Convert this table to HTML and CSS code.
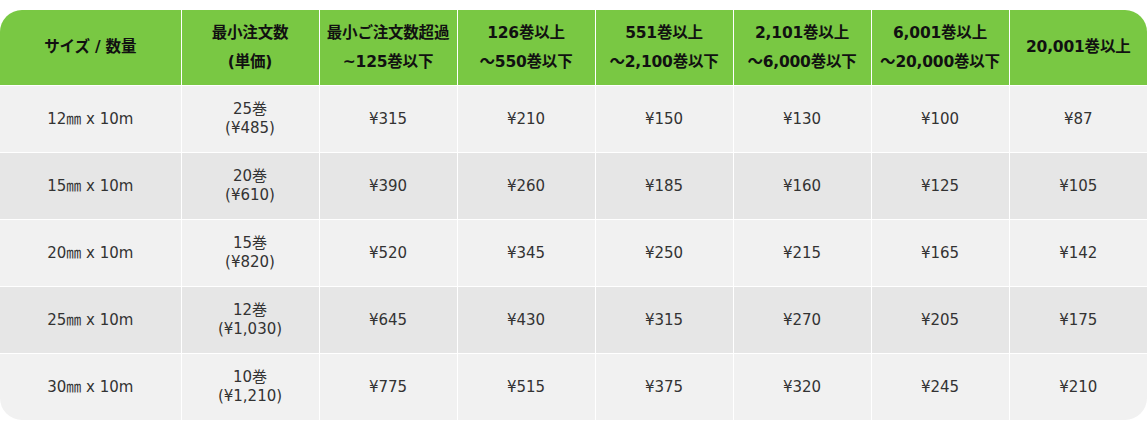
FILE: index.html
```html
<!DOCTYPE html>
<html lang="ja">
<head>
<meta charset="utf-8">
<link rel="stylesheet" href="styles.css">
</head>
<body>
<div class="wrap">
<table class="price">
<colgroup>
<col class="c-first"><col class="c"><col class="c"><col class="c"><col class="c"><col class="c"><col class="c"><col class="c">
</colgroup>
<thead>
<tr>
<th>サイズ / 数量</th>
<th>最小注文数<br>(単価)</th>
<th>最小ご注文数超過<br>~125巻以下</th>
<th>126巻以上<br>～550巻以下</th>
<th>551巻以上<br>～2,100巻以下</th>
<th>2,101巻以上<br>～6,000巻以下</th>
<th>6,001巻以上<br>～20,000巻以下</th>
<th>20,001巻以上</th>
</tr>
</thead>
<tbody>
<tr><td>12㎜ x 10m</td><td>25巻<br>(¥485)</td><td>¥315</td><td>¥210</td><td>¥150</td><td>¥130</td><td>¥100</td><td>¥87</td></tr>
<tr><td>15㎜ x 10m</td><td>20巻<br>(¥610)</td><td>¥390</td><td>¥260</td><td>¥185</td><td>¥160</td><td>¥125</td><td>¥105</td></tr>
<tr><td>20㎜ x 10m</td><td>15巻<br>(¥820)</td><td>¥520</td><td>¥345</td><td>¥250</td><td>¥215</td><td>¥165</td><td>¥142</td></tr>
<tr><td>25㎜ x 10m</td><td>12巻<br>(¥1,030)</td><td>¥645</td><td>¥430</td><td>¥315</td><td>¥270</td><td>¥205</td><td>¥175</td></tr>
<tr><td>30㎜ x 10m</td><td>10巻<br>(¥1,210)</td><td>¥775</td><td>¥515</td><td>¥375</td><td>¥320</td><td>¥245</td><td>¥210</td></tr>
</tbody>
</table>
</div>
</body>
</html>
```
FILE: styles.css
```css
html, body {
  margin: 0;
  padding: 0;
  background: #ffffff;
}
body {
  padding-top: 10px;
  font-family: "DejaVu Sans", "Noto Sans CJK JP", sans-serif;
}
.wrap {
  width: 1147px;
  border-radius: 22px;
  overflow: hidden;
}
.price {
  width: 1147px;
  table-layout: fixed;
  border-collapse: collapse;
}
.c-first { width: 181px; }
.c { width: 138px; }
.price th, .price td {
  text-align: center;
  vertical-align: middle;
  padding: 0;
  border-right: 1px solid #ffffff;
  border-bottom: 1px solid #ffffff;
}
.price th:last-child, .price td:last-child { border-right: none; }
.price tbody tr:last-child td { border-bottom: none; }
.price th {
  background: #79c843;
  color: #111111;
  font-weight: bold;
  font-size: 15.5px;
  line-height: 29px;
  height: 75px;
  white-space: nowrap;
  letter-spacing: -0.2px;
}
.price td {
  color: #333333;
  font-size: 15px;
  line-height: 19px;
  height: 66px;
}
.price tbody tr:nth-child(odd) td { background: #f1f1f1; }
.price tbody tr:nth-child(even) td { background: #e6e6e6; }
```
